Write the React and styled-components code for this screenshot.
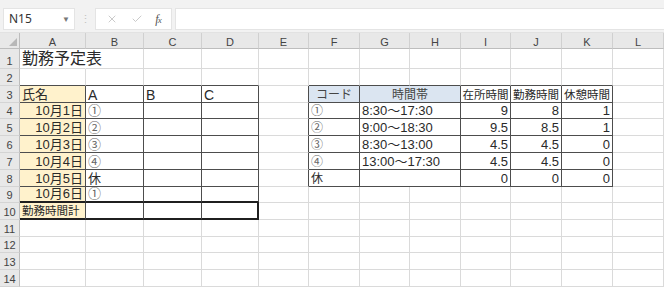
import React from 'react';
import styled, { createGlobalStyle } from 'styled-components';
import { X, Check } from 'lucide-react';

const GlobalStyle = createGlobalStyle`
  html, body {
    margin: 0;
    padding: 0;
    background: #ffffff;
    overflow: hidden;
  }
  body {
    font-family: "Liberation Sans", "Noto Sans CJK JP", sans-serif;
  }
`;

const COLS = ['A', 'B', 'C', 'D', 'E', 'F', 'G', 'H', 'I', 'J', 'K', 'L'];
const COL_W = [66, 58, 58, 57, 50, 51, 50, 51, 50, 51, 51, 51];
const ROW_H = [20, 17, 17, 16, 17, 17, 17, 17, 16, 17, 17, 16, 17, 17];

const YELLOW = '#fff2cc';
const BLUE = '#dbe5f1';
const GRID = '#dadada';
const LINE = '#4d4d4d';

// tables with thin borders: [rowFrom, rowTo, colFrom, colTo]
const TABLES = [
  [3, 10, 0, 3],
  [3, 8, 5, 10],
];
const inTable = (r, c) =>
  TABLES.some(([r1, r2, c1, c2]) => r >= r1 && r <= r2 && c >= c1 && c <= c2);

// the total row is boxed with a medium line
const inTotal = (r, c) => r === 10 && c >= 0 && c <= 3;

const circ = { color: '#666' };

const cells = {
  '1,0': { text: '勤務予定表', size: 16, noRight: true },
  '3,0': { text: '氏名', fill: YELLOW },
  '3,1': { text: 'A', size: 14 },
  '3,2': { text: 'B', size: 14 },
  '3,3': { text: 'C', size: 14 },
  '3,5': { text: 'コード', fill: BLUE, align: 'center', size: 12, color: '#444' },
  '3,6': { text: '時間帯', fill: BLUE, align: 'center', size: 12, span: 2, color: '#444' },
  '3,8': { text: '在所時間', align: 'center', size: 11.5 },
  '3,9': { text: '勤務時間', align: 'center', size: 11.5 },
  '3,10': { text: '休憩時間', align: 'center', size: 11.5 },
  '10,0': { text: '勤務時間計', fill: YELLOW, size: 11.5 },
};

const dates = ['10月1日', '10月2日', '10月3日', '10月4日', '10月5日', '10月6日'];
const codes = ['①', '②', '③', '④', '休', '①'];
dates.forEach((d, i) => {
  cells[`${i + 4},0`] = { text: d, fill: YELLOW, align: 'right' };
  cells[`${i + 4},1`] = { text: codes[i], ...(codes[i] === '休' ? {} : circ) };
});

const shifts = [
  ['①', '8:30～17:30', '9', '8', '1'],
  ['②', '9:00～18:30', '9.5', '8.5', '1'],
  ['③', '8:30～13:00', '4.5', '4.5', '0'],
  ['④', '13:00～17:30', '4.5', '4.5', '0'],
  ['休', '', '0', '0', '0'],
];
shifts.forEach(([code, time, stay, work, rest], i) => {
  const r = i + 4;
  cells[`${r},5`] = { text: code, size: 12, ...(code === '休' ? {} : circ) };
  cells[`${r},6`] = { text: time, span: 2 };
  cells[`${r},8`] = { text: stay, align: 'right' };
  cells[`${r},9`] = { text: work, align: 'right' };
  cells[`${r},10`] = { text: rest, align: 'right' };
});

const edgeRight = (r, c, span) => {
  const last = c + span - 1;
  if (inTotal(r, last) && !inTotal(r, last + 1)) return 'thick';
  if (inTable(r, last) || inTable(r, last + 1)) return 'thin';
  return 'grid';
};

const edgeBottom = (r, c) => {
  if (inTotal(r, c) || inTotal(r + 1, c)) return 'thick';
  if (inTable(r, c) || inTable(r + 1, c)) return 'thin';
  return 'grid';
};

const lineCss = (kind) =>
  kind === 'thick' ? `2px solid #1f1f1f` : kind === 'thin' ? `1px solid ${LINE}` : `1px solid ${GRID}`;

const Frame = styled.div`
  width: 664px;
  height: 287px;
  overflow: hidden;
  display: flex;
  flex-direction: column;
  background: #fff;
`;

const Toolbar = styled.div`
  height: 33px;
  flex: none;
  box-sizing: border-box;
  display: flex;
  align-items: flex-start;
  padding: 8px 0 0 3px;
  background: #f2f2f2;
  border-bottom: 1px solid #e2e2e2;
`;

const NameBox = styled.div`
  width: 72px;
  height: 22px;
  box-sizing: border-box;
  background: #fff;
  border: 1px solid #e4e4e4;
  display: flex;
  align-items: center;
  justify-content: space-between;
  padding: 0 4px 0 5px;
  font-family: "Noto Sans", "Liberation Sans", sans-serif;
  font-size: 12px;
  line-height: 16px;
  color: #333;
`;

const Caret = styled.span`
  font-size: 8px;
  color: #777;
`;

const Grip = styled.div`
  width: 20px;
  height: 22px;
  display: flex;
  align-items: center;
  justify-content: center;
  color: #c2c2c2;
  font-size: 11px;
  line-height: 14px;
`;

const FnButtons = styled.div`
  width: 77px;
  height: 22px;
  box-sizing: border-box;
  background: #fff;
  border: 1px solid #e4e4e4;
  display: flex;
  align-items: center;
  justify-content: space-around;
  padding: 0 4px;
  color: #b8b8b8;
`;

const Fx = styled.span`
  font-family: "Liberation Serif", serif;
  font-style: italic;
  font-size: 12px;
  line-height: 14px;
  color: #555;
  letter-spacing: -1px;

  small {
    font-size: 9px;
  }
`;

const FormulaInput = styled.div`
  flex: 1;
  height: 22px;
  margin-left: 3px;
  box-sizing: border-box;
  background: #fff;
  border: 1px solid #e4e4e4;
  border-right: none;
`;

const Sheet = styled.div`
  flex: 1;
  display: grid;
  grid-template-columns: 20px ${COL_W.map((w) => `${w}px`).join(' ')};
  grid-template-rows: 16px ${ROW_H.map((h) => `${h}px`).join(' ')};
  background: #fff;
`;

const Corner = styled.div`
  background: #e8e8e8;
  border-right: 1px solid #bdbdbd;
  border-bottom: 1px solid #bdbdbd;
  box-sizing: border-box;
  display: flex;
  align-items: flex-end;
  justify-content: flex-end;
  padding: 0 2px 2px 0;
`;

const ColHead = styled.div`
  background: #e8e8e8;
  box-sizing: border-box;
  border-right: 1px solid #d0d0d0;
  border-bottom: 1px solid #bdbdbd;
  display: flex;
  align-items: center;
  justify-content: center;
  padding-top: 2px;
  font-family: "Liberation Sans", sans-serif;
  font-size: 11px;
  line-height: 12px;
  color: #444;
`;

const RowHead = styled.div`
  background: #e8e8e8;
  box-sizing: border-box;
  border-right: 1px solid #bdbdbd;
  border-bottom: 1px solid #d4d4d4;
  display: flex;
  align-items: flex-end;
  justify-content: center;
  font-family: "Liberation Sans", sans-serif;
  font-size: 11px;
  line-height: 14px;
  color: #444;
`;

const Cell = styled.div`
  box-sizing: border-box;
  grid-column: span ${(p) => p.$span};
  background: ${(p) => p.$fill || 'transparent'};
  border-right: ${(p) => (p.$noRight ? '1px solid transparent' : lineCss(p.$right))};
  border-bottom: ${(p) => lineCss(p.$bottom)};
  display: flex;
  align-items: flex-end;
  justify-content: ${(p) =>
    p.$align === 'right' ? 'flex-end' : p.$align === 'center' ? 'center' : 'flex-start'};
  padding: 0 2px;
  white-space: nowrap;
  overflow: visible;
  font-family: "Liberation Sans", "Noto Sans CJK JP", sans-serif;
  font-size: ${(p) => p.$size}px;
  line-height: ${(p) => (p.$size > 14 ? 18 : 14)}px;
  color: ${(p) => p.$color || '#2a2a2a'};
`;

const SheetBody = () => {
  const out = [];
  out.push(
    <Corner key="corner">
      <svg width="8" height="8" viewBox="0 0 8 8">
        <polygon points="8,0 8,8 0,8" fill="#b8b8b8" />
      </svg>
    </Corner>
  );
  COLS.forEach((c) => out.push(<ColHead key={`h${c}`}>{c}</ColHead>));

  ROW_H.forEach((_, i) => {
    const r = i + 1;
    out.push(<RowHead key={`r${r}`}>{r}</RowHead>);
    let c = 0;
    while (c < COLS.length) {
      const d = cells[`${r},${c}`] || {};
      const span = d.span || 1;
      out.push(
        <Cell
          key={`${r}-${c}`}
          $span={span}
          $fill={d.fill}
          $align={d.align}
          $size={d.size || 13}
          $color={d.color}
          $noRight={d.noRight}
          $right={edgeRight(r, c, span)}
          $bottom={edgeBottom(r, c)}
        >
          {d.text}
        </Cell>
      );
      c += span;
    }
  });
  return <Sheet>{out}</Sheet>;
};

export default function App() {
  return (
    <>
      <GlobalStyle />
      <Frame>
        <Toolbar>
          <NameBox>
            <span>N15</span>
            <Caret>▼</Caret>
          </NameBox>
          <Grip>⋮</Grip>
          <FnButtons>
            <X size={12} strokeWidth={1.5} />
            <Check size={12} strokeWidth={1.5} />
            <Fx>
              f<small>x</small>
            </Fx>
          </FnButtons>
          <FormulaInput />
        </Toolbar>
        <SheetBody />
      </Frame>
    </>
  );
}
